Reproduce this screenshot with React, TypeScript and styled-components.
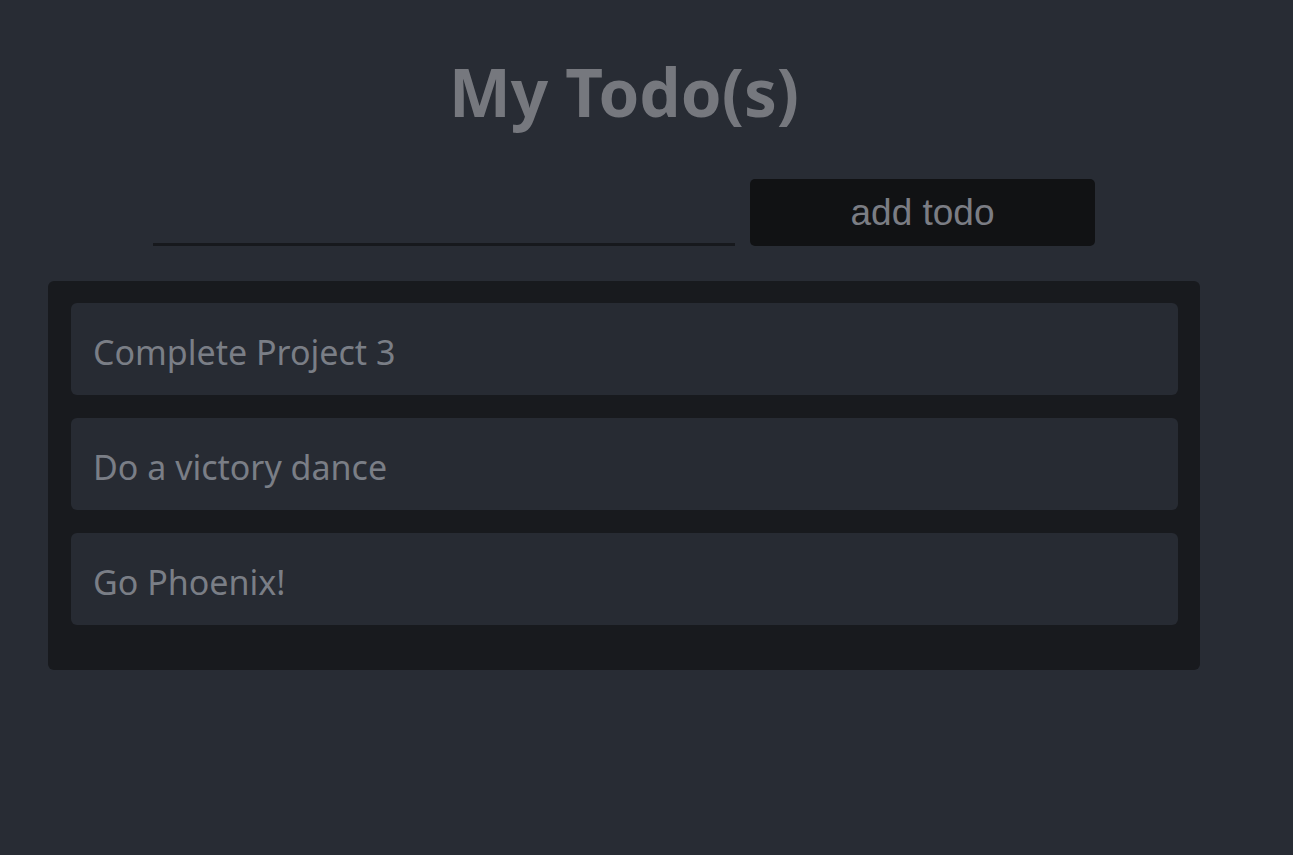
import React from "react";
import styled, { createGlobalStyle } from "styled-components";

const Global = createGlobalStyle`
  html, body { margin: 0; padding: 0; background: #282c34; }
  body { font-family: "Noto Sans", "Open Sans", sans-serif; }
`;

const Page = styled.div`
  width: 1248px;
  min-height: 855px;
  box-sizing: border-box;
  padding: 0 48px;
  display: flex;
  flex-direction: column;
  align-items: center;
`;

const Title = styled.h1`
  margin: 50px 0 0;
  font-family: "Noto Sans", sans-serif;
  font-weight: 700;
  font-size: 65.5px;
  line-height: 84px;
  color: #76787e;
`;

const Form = styled.form`
  margin-top: 45px;
  display: flex;
  align-items: flex-end;
  gap: 15px;
`;

const Input = styled.input`
  width: 582px;
  height: 40px;
  box-sizing: border-box;
  background: transparent;
  border: none;
  border-bottom: 3px solid #17191d;
  outline: none;
  color: #7b7f87;
  font-size: 28px;
  font-family: "Noto Sans", sans-serif;
`;

const Button = styled.button`
  width: 345px;
  height: 67px;
  background: #111214;
  border: none;
  border-radius: 5px;
  color: #7b7d84;
  font-family: "Liberation Sans", Arial, sans-serif;
  font-size: 37px;
  padding: 0;
  cursor: pointer;
`;

const List = styled.ul`
  list-style: none;
  margin: 35px 0 0;
  align-self: stretch;
  background: #181a1e;
  border-radius: 6px;
  padding: 22px 22px 45px 23px;
  display: flex;
  flex-direction: column;
  gap: 23px;
`;

const Item = styled.li`
  background: #272b33;
  border-radius: 6px;
  height: 92px;
  box-sizing: border-box;
  padding: 6px 22px 0;
  display: flex;
  align-items: center;
  font-family: "Noto Sans", sans-serif;
  font-size: 34px;
  color: #7a7e86;
`;

const todos = ["Complete Project 3", "Do a victory dance", "Go Phoenix!"];

export default function App() {
  return (
    <>
      <Global />
      <Page>
        <Title>My Todo(s)</Title>
        <Form onSubmit={(e) => e.preventDefault()}>
          <Input type="text" />
          <Button type="submit">add todo</Button>
        </Form>
        <List>
          {todos.map((t) => (
            <Item key={t}>{t}</Item>
          ))}
        </List>
      </Page>
    </>
  );
}
